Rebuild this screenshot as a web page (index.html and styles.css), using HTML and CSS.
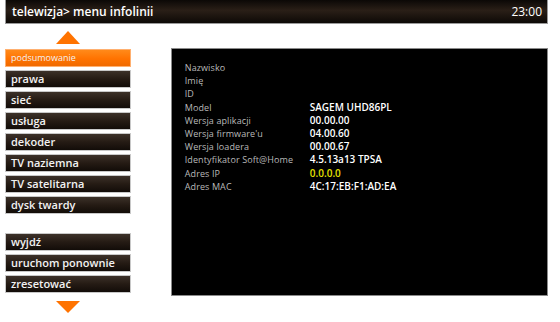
FILE: index.html
```html
<!DOCTYPE html>
<html lang="pl">
<head>
  <meta charset="UTF-8">
  <title>menu infolinii</title>
  <link rel="stylesheet" href="styles.css">
</head>
<body>
<header class="topbar">
  <span class="crumb">telewizja&gt; menu infolinii</span>
  <span class="clock">23:00</span>
</header>
<div class="screen">
  <!-- left menu -->
  <nav class="menu">
    <div class="arrow up"></div>
    <div class="group">
      <div class="item active">podsumowanie</div>
      <div class="item">prawa</div>
      <div class="item">sieć</div>
      <div class="item">usługa</div>
      <div class="item">dekoder</div>
      <div class="item">TV naziemna</div>
      <div class="item">TV satelitarna</div>
      <div class="item">dysk twardy</div>
    </div>
    <div class="group actions">
      <div class="item">wyjdź</div>
      <div class="item">uruchom ponownie</div>
      <div class="item">zresetować</div>
    </div>
    <div class="arrow down"></div>
  </nav>

  <!-- info panel -->
  <section class="panel">
    <div class="row"><span class="label">Nazwisko</span><span class="value"></span></div>
    <div class="row"><span class="label">Imię</span><span class="value"></span></div>
    <div class="row"><span class="label">ID</span><span class="value"></span></div>
    <div class="row"><span class="label">Model</span><span class="value">SAGEM UHD86PL</span></div>
    <div class="row"><span class="label">Wersja aplikacji</span><span class="value">00.00.00</span></div>
    <div class="row"><span class="label">Wersja firmware'u</span><span class="value">04.00.60</span></div>
    <div class="row"><span class="label">Wersja loadera</span><span class="value">00.00.67</span></div>
    <div class="row"><span class="label">Identyfikator Soft@Home</span><span class="value">4.5.13a13 TPSA</span></div>
    <div class="row"><span class="label">Adres IP</span><span class="value ip">0.0.0.0</span></div>
    <div class="row"><span class="label">Adres MAC</span><span class="value">4C:17:EB:F1:AD:EA</span></div>
  </section>
</div>
</body>
</html>
```

FILE: styles.css
```css
/* General */
body {
  margin: 0;
  padding: 0 0 0 5px;
  background: #fff;
  font-family: 'Open Sans', 'DejaVu Sans', sans-serif;
  color: #fff;
  width: 543px;
}
/* Top bar */
.topbar {
  display: flex;
  justify-content: space-between;
  align-items: center;
  height: 23px;
  padding: 0 5px 0 6px;
  background: linear-gradient(#0b0806, #2a1f17 45%, #0d0906);
  border: 1px solid #9a9a9a;
  border-top: none;
  font-size: 12px;
  font-weight: 600;
}
.clock {
  font-weight: 400;
}
.screen {
  display: flex;
  gap: 40px;
}
/* Menu */
.menu {
  width: 126px;
  display: flex;
  flex-direction: column;
}
.arrow {
  align-self: center;
  width: 0;
  height: 0;
  border-left: 12px solid transparent;
  border-right: 12px solid transparent;
}
.arrow.up {
  margin-top: 7px;
  border-bottom: 13px solid #ff7300;
}
.arrow.down {
  margin-top: 8px;
  border-top: 12px solid #ff7300;
}
.group {
  display: flex;
  flex-direction: column;
  gap: 3px;
  margin-top: 5px;
}
.group.actions {
  margin-top: 19px;
}
.item {
  height: 16px;
  line-height: 16px;
  padding: 0 5px;
  border: 1px solid #c8c8c8;
  background: linear-gradient(#3c3129, #251b14 50%, #120c08);
  font-size: 11px;
  font-weight: 600;
  color: #f2f2f2;
  white-space: nowrap;
}
.item.active {
  background: linear-gradient(#ff8a1a, #ff7300 55%, #f06a00);
  border-color: #ffb070;
  font-size: 9px;
  font-weight: 400;
}
/* Info panel */
.panel {
  margin-top: 24px;
  width: 376px;
  height: 234px;
  padding-top: 12px;
  background: #000;
  border: 1px solid #8a8a8a;
  font-size: 9px;
}
.row {
  display: flex;
  align-items: baseline;
  height: 13.2px;
  line-height: 13.2px;
  padding-left: 13px;
}
.label {
  width: 125px;
  color: #b9b9b9;
  letter-spacing: 0.1px;
}
.value {
  font-size: 10px;
  font-weight: 600;
  color: #fff;
}
.value.ip {
  color: #e6e000;
}
```
